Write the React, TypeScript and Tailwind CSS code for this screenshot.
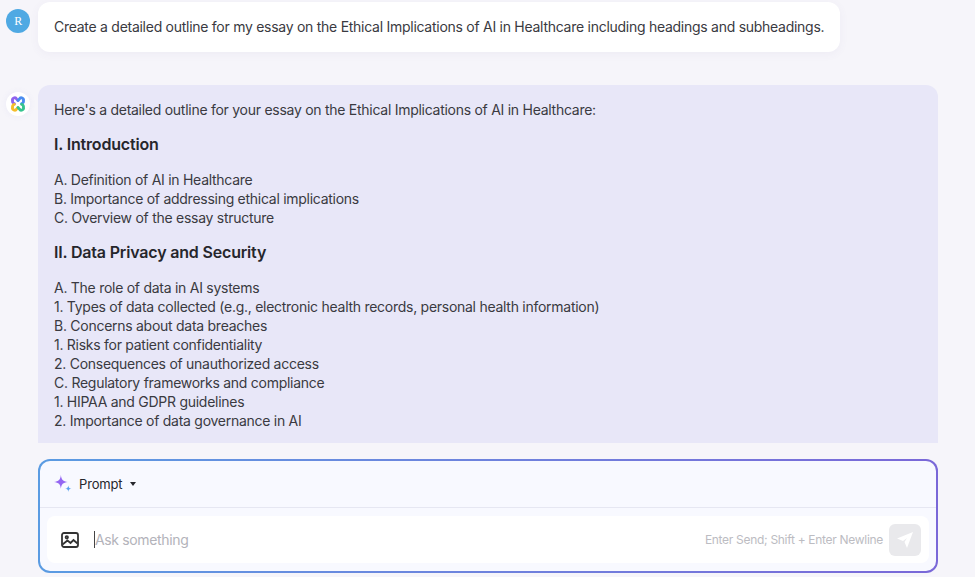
const F = "[font-family:Inter,'Liberation_Sans',sans-serif]";

function Logo() {
  return (
    <div className="w-6 h-6 rounded-full bg-white flex items-center justify-center shadow-[0_0_6px_rgba(120,110,200,0.08)]">
      <svg width="16" height="16" viewBox="0 0 16 16" fill="none" strokeWidth="2.8" strokeLinecap="round">
        <path d="M8 4.4 L6.6 3 A2.2 2.2 0 0 0 2.6 4.8 A2.2 2.2 0 0 0 4.4 7.6" stroke="#8f62ee" />
        <path d="M8 4.4 L9.4 3 A2.2 2.2 0 0 1 13.4 4.8 A2.2 2.2 0 0 1 11.6 7.6" stroke="#4a8cf0" />
        <path d="M4.4 8.4 A2.2 2.2 0 0 0 2.6 11.2 A2.2 2.2 0 0 0 6.6 13 L8 11.6" stroke="#f4bd2a" />
        <path d="M11.6 8.4 A2.2 2.2 0 0 1 13.4 11.2 A2.2 2.2 0 0 1 9.4 13 L8 11.6" stroke="#35c48e" />
      </svg>
    </div>
  );
}

function Lines({ items }: { items: string[] }) {
  return (
    <div className="leading-[19px]">
      {items.map((t) => (
        <div key={t}>{t}</div>
      ))}
    </div>
  );
}

export default function App() {
  return (
    <div className={`${F} w-[975px] h-[577px] overflow-hidden bg-[#f6f5fa] text-[14px] tracking-[-0.27px] text-[#3a3a41] flex flex-col`}>
      <div className="h-[443px] overflow-hidden pl-[6px] pt-[2px] shrink-0">
        <div className="flex items-start">
          <div className="w-6 h-6 mt-[7px] rounded-full bg-[#4fa9e3] text-white flex items-center justify-center text-[12px] font-normal [font-family:'Liberation_Serif',serif]">
            R
          </div>
          <div className="ml-2 h-[50px] w-[802px] rounded-[12px] bg-white flex items-center px-4 pb-[1px] shadow-[0_2px_10px_rgba(100,90,160,0.06)] whitespace-nowrap">
            Create a detailed outline for my essay on the Ethical Implications of AI in Healthcare including headings and subheadings.
          </div>
        </div>
        <div className="flex items-start mt-[33px]">
          <div className="mt-[7px]">
            <Logo />
          </div>
          <div className="ml-2 w-[900px] h-[400px] rounded-t-[12px] bg-[#e8e7f8] px-4 pt-[15px]">
            <div className="leading-[19px]">Here's a detailed outline for your essay on the Ethical Implications of AI in Healthcare:</div>
            <h2 className="text-[16px] font-semibold tracking-[-0.18px] leading-[19px] mt-[16px] mb-[16px] text-[#26262c]">I. Introduction</h2>
            <Lines
              items={[
                "A. Definition of AI in Healthcare",
                "B. Importance of addressing ethical implications",
                "C. Overview of the essay structure",
              ]}
            />
            <h2 className="text-[16px] font-semibold tracking-[-0.18px] leading-[19px] mt-[16px] mb-[16px] text-[#26262c]">II. Data Privacy and Security</h2>
            <Lines
              items={[
                "A. The role of data in AI systems",
                "1. Types of data collected (e.g., electronic health records, personal health information)",
                "B. Concerns about data breaches",
                "1. Risks for patient confidentiality",
                "2. Consequences of unauthorized access",
                "C. Regulatory frameworks and compliance",
                "1. HIPAA and GDPR guidelines",
                "2. Importance of data governance in AI",
              ]}
            />
          </div>
        </div>
      </div>

      <div className="ml-[38px] mt-4 w-[900px] h-[114px] rounded-[12px] p-[2px] bg-gradient-to-r from-[#5a9be2] to-[#7a68d8]">
        <div className="w-full h-full rounded-[10px] bg-[#f8f9ff] flex flex-col">
          <div className="h-[47px] border-b border-[#e6e7f2] flex items-center pl-[14px] pt-[2px] shrink-0">
            <svg width="18" height="18" viewBox="0 0 17 17" className="-mt-[2px]">
              <path d="M6.5 0 C7 4.5 8.5 6 13 6.5 C8.5 7 7 8.5 6.5 13 C6 8.5 4.5 7 0 6.5 C4.5 6 6 4.5 6.5 0 Z" fill="#9466f2" />
              <path d="M13.5 10 C13.7 12 14.5 12.8 16.5 13 C14.5 13.2 13.7 14 13.5 16 C13.3 14 12.5 13.2 10.5 13 C12.5 12.8 13.3 12 13.5 10 Z" fill="#5aa2ee" />
            </svg>
            <span className="ml-[7px] text-[#26262c] text-[13px] tracking-[-0.15px]">Prompt</span>
            <span className="ml-[8px] -mt-[2px] w-0 h-0 border-x-[3.5px] border-x-transparent border-t-[4px] border-t-[#26262c]" />
          </div>
          <div className="mx-[7px] mt-[8px] h-[47px] rounded-[8px] bg-white flex items-center pl-[14px] pr-[8px]">
            <svg width="18" height="18" viewBox="0 0 18 18" fill="none" stroke="#333" strokeWidth="1.8">
              <rect x="1" y="2" width="16" height="14" rx="2" />
              <circle cx="5.8" cy="6.3" r="1.2" />
              <path d="M1.5 13.5 L6.5 9.5 L9.5 12 L12.5 9 L16.5 12.5" />
            </svg>
            <div className="ml-[15px] w-px h-[17px] bg-[#444]" />
            <span className="text-[14px] text-[#b3b3ba] tracking-[-0.35px] pb-[1px]">Ask something</span>
            <span className="ml-auto text-[12px] tracking-[-0.3px] text-[#bcbcc2]">Enter Send; Shift + Enter Newline</span>
            <div className="ml-[6px] w-8 h-8 rounded-[6px] bg-[#e9e9ec] flex items-center justify-center">
              <svg width="18" height="18" viewBox="0 0 18 18" fill="#fff">
                <path d="M17 1 L1 7.5 L7 10 L11 7 L8.5 11 L11 17 Z" />
              </svg>
            </div>
          </div>
        </div>
      </div>
    </div>
  );
}
